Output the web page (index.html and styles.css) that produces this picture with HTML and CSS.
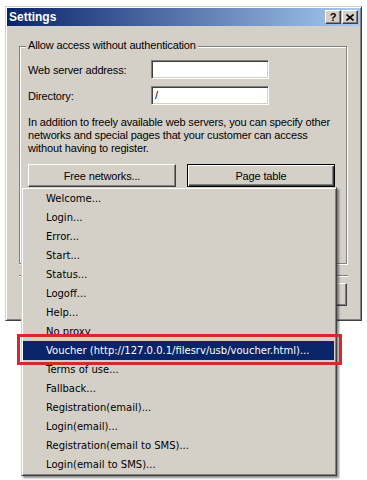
FILE: index.html
```html
<!DOCTYPE html>
<html lang="en">
  <head>
    <meta charset="UTF-8" />
    <title>Settings</title>
    <link rel="stylesheet" href="styles.css">
  </head>
  <body>
    <div class="window">
      <div class="titlebar">
        <span class="title">Settings</span>
        <div class="title-buttons">
          <span class="tbtn">?</span>
          <span class="tbtn">
            <svg width="8" height="7" viewBox="0 0 8 7"><path d="M0.5 0.5L7.5 6.5M7.5 0.5L0.5 6.5" stroke="#000" stroke-width="1.6" fill="none"/></svg>
          </span>
        </div>
      </div>
      <div class="content">
        <div class="group">
          <span class="group-title">Allow access without authentication</span>
          <div class="field">
            <label>Web server address:</label>
            <span class="input"></span>
          </div>
          <div class="field second">
            <label>Directory:</label>
            <span class="input">/</span>
          </div>
          <p class="note">In addition to freely available web servers, you can specify other<br>networks and special pages that your customer can access<br>without having to register.</p>
          <div class="buttons">
            <span class="btn">Free networks...</span>
            <span class="btn default">Page table</span>
          </div>
        </div>
        <div class="separator"></div>
        <div class="footer">
          <span class="btn small">OK</span>
          <span class="btn small">Cancel</span>
        </div>
      </div>
    </div>

    <!-- popup menu of the Page table button -->
    <ul class="menu">
      <li>Welcome...</li>
      <li>Login...</li>
      <li>Error...</li>
      <li>Start...</li>
      <li>Status...</li>
      <li>Logoff...</li>
      <li>Help...</li>
      <li>No proxy</li>
      <li class="active">Voucher (http://127.0.0.1/filesrv/usb/voucher.html)...</li>
      <li>Terms of use...</li>
      <li>Fallback...</li>
      <li>Registration(email)...</li>
      <li>Login(email)...</li>
      <li>Registration(email to SMS)...</li>
      <li>Login(email to SMS)...</li>
    </ul>
    <div class="callout"></div>
  </body>
</html>
```

FILE: styles.css
```css
body {
  margin: 0;
  width: 367px;
  height: 480px;
  overflow: hidden;
  background-color: #fff;
  font-family: "Liberation Sans", Arial, sans-serif;
  font-size: 11px;
  letter-spacing: -0.15px;
  color: #000;
}
.window {
  box-sizing: border-box;
  margin: 6px 0 0 5px;
  width: 357px;
  height: 315px;
  padding: 1px;
  background-color: #d4d0c8;
  border: 1px solid;
  border-color: #d4d0c8 #404040 #404040 #d4d0c8;
  box-shadow: inset 1px 1px 0 #fff, inset -1px -1px 0 #808080;
}
.titlebar {
  height: 18px;
  display: flex;
  align-items: center;
  justify-content: space-between;
  padding: 0 2px;
  background: linear-gradient(to right, #0a246a, #a6caf0);
}
.title {
  color: #fff;
  font-weight: bold;
  font-size: 12px;
  letter-spacing: 0;
}
.title-buttons {
  display: flex;
}
.tbtn {
  box-sizing: border-box;
  width: 16px;
  height: 14px;
  display: flex;
  align-items: center;
  justify-content: center;
  background-color: #d4d0c8;
  border: 1px solid;
  border-color: #fff #404040 #404040 #fff;
  box-shadow: inset -1px -1px 0 #808080;
  font-weight: bold;
  font-size: 11px;
  letter-spacing: 0;
}
.tbtn + .tbtn {
  margin-left: 1px;
}
.content {
  padding: 20px 0 0 12px;
}
.group {
  box-sizing: border-box;
  width: 328px;
  height: 218px;
  padding: 0 8px;
  border: 1px solid #808080;
  box-shadow: 1px 1px 0 #fff, inset 1px 1px 0 #fff;
}
.group-title {
  display: block;
  width: max-content;
  margin: -8px 0 0 -2px;
  padding: 0 2px;
  line-height: 13px;
  background-color: #d4d0c8;
}
.field {
  display: flex;
  align-items: center;
  margin-top: 8px;
}
.field.second {
  margin-top: 7px;
}
.field label {
  width: 123px;
}
.input {
  box-sizing: border-box;
  width: 118px;
  height: 19px;
  padding: 2px 3px;
  line-height: 13px;
  background-color: #fff;
  border: 1px solid;
  border-color: #808080 #fff #fff #808080;
  box-shadow: inset 1px 1px 0 #404040, inset -1px -1px 0 #d4d0c8;
}
.note {
  margin: 11px 0 0;
  line-height: 13px;
  white-space: nowrap;
}
.buttons {
  display: flex;
  gap: 11px;
  margin-top: 9px;
}
.btn {
  box-sizing: border-box;
  width: 148px;
  height: 23px;
  display: flex;
  align-items: center;
  justify-content: center;
  background-color: #d4d0c8;
  border: 1px solid;
  border-color: #fff #404040 #404040 #fff;
  box-shadow: inset -1px -1px 0 #808080;
}
.btn.default {
  border-color: #000;
  box-shadow: inset 1px 1px 0 #fff, inset -1px -1px 0 #404040, inset -2px -2px 0 #808080;
}
.btn.small {
  width: 75px;
}
.separator {
  width: 329px;
  height: 1px;
  margin-top: 11px;
  background-color: #808080;
  border-bottom: 1px solid #fff;
}
.footer {
  display: flex;
  justify-content: flex-end;
  gap: 6px;
  width: 328px;
  margin-top: 6px;
}
.menu {
  position: absolute;
  left: 21px;
  top: 187px;
  box-sizing: border-box;
  width: 316px;
  margin: 0;
  padding: 1px;
  list-style: none;
  background-color: #d4d0c8;
  border: 1px solid;
  border-color: #d4d0c8 #404040 #404040 #d4d0c8;
  box-shadow: inset 1px 1px 0 #fff, inset -1px -1px 0 #808080, 2px 2px 2px rgba(0, 0, 0, 0.45);
  font-family: "DejaVu Sans", Tahoma, sans-serif;
  font-size: 10px;
  letter-spacing: 0;
}
.menu li {
  height: 19px;
  line-height: 19px;
  padding-left: 23px;
  margin-right: 1px;
  white-space: nowrap;
}
.menu li.active {
  background-color: #0a246a;
  color: #fff;
}
.callout {
  position: absolute;
  left: 17px;
  top: 334px;
  width: 319px;
  height: 25px;
  border: 3px solid #d42a2e;
}
```
